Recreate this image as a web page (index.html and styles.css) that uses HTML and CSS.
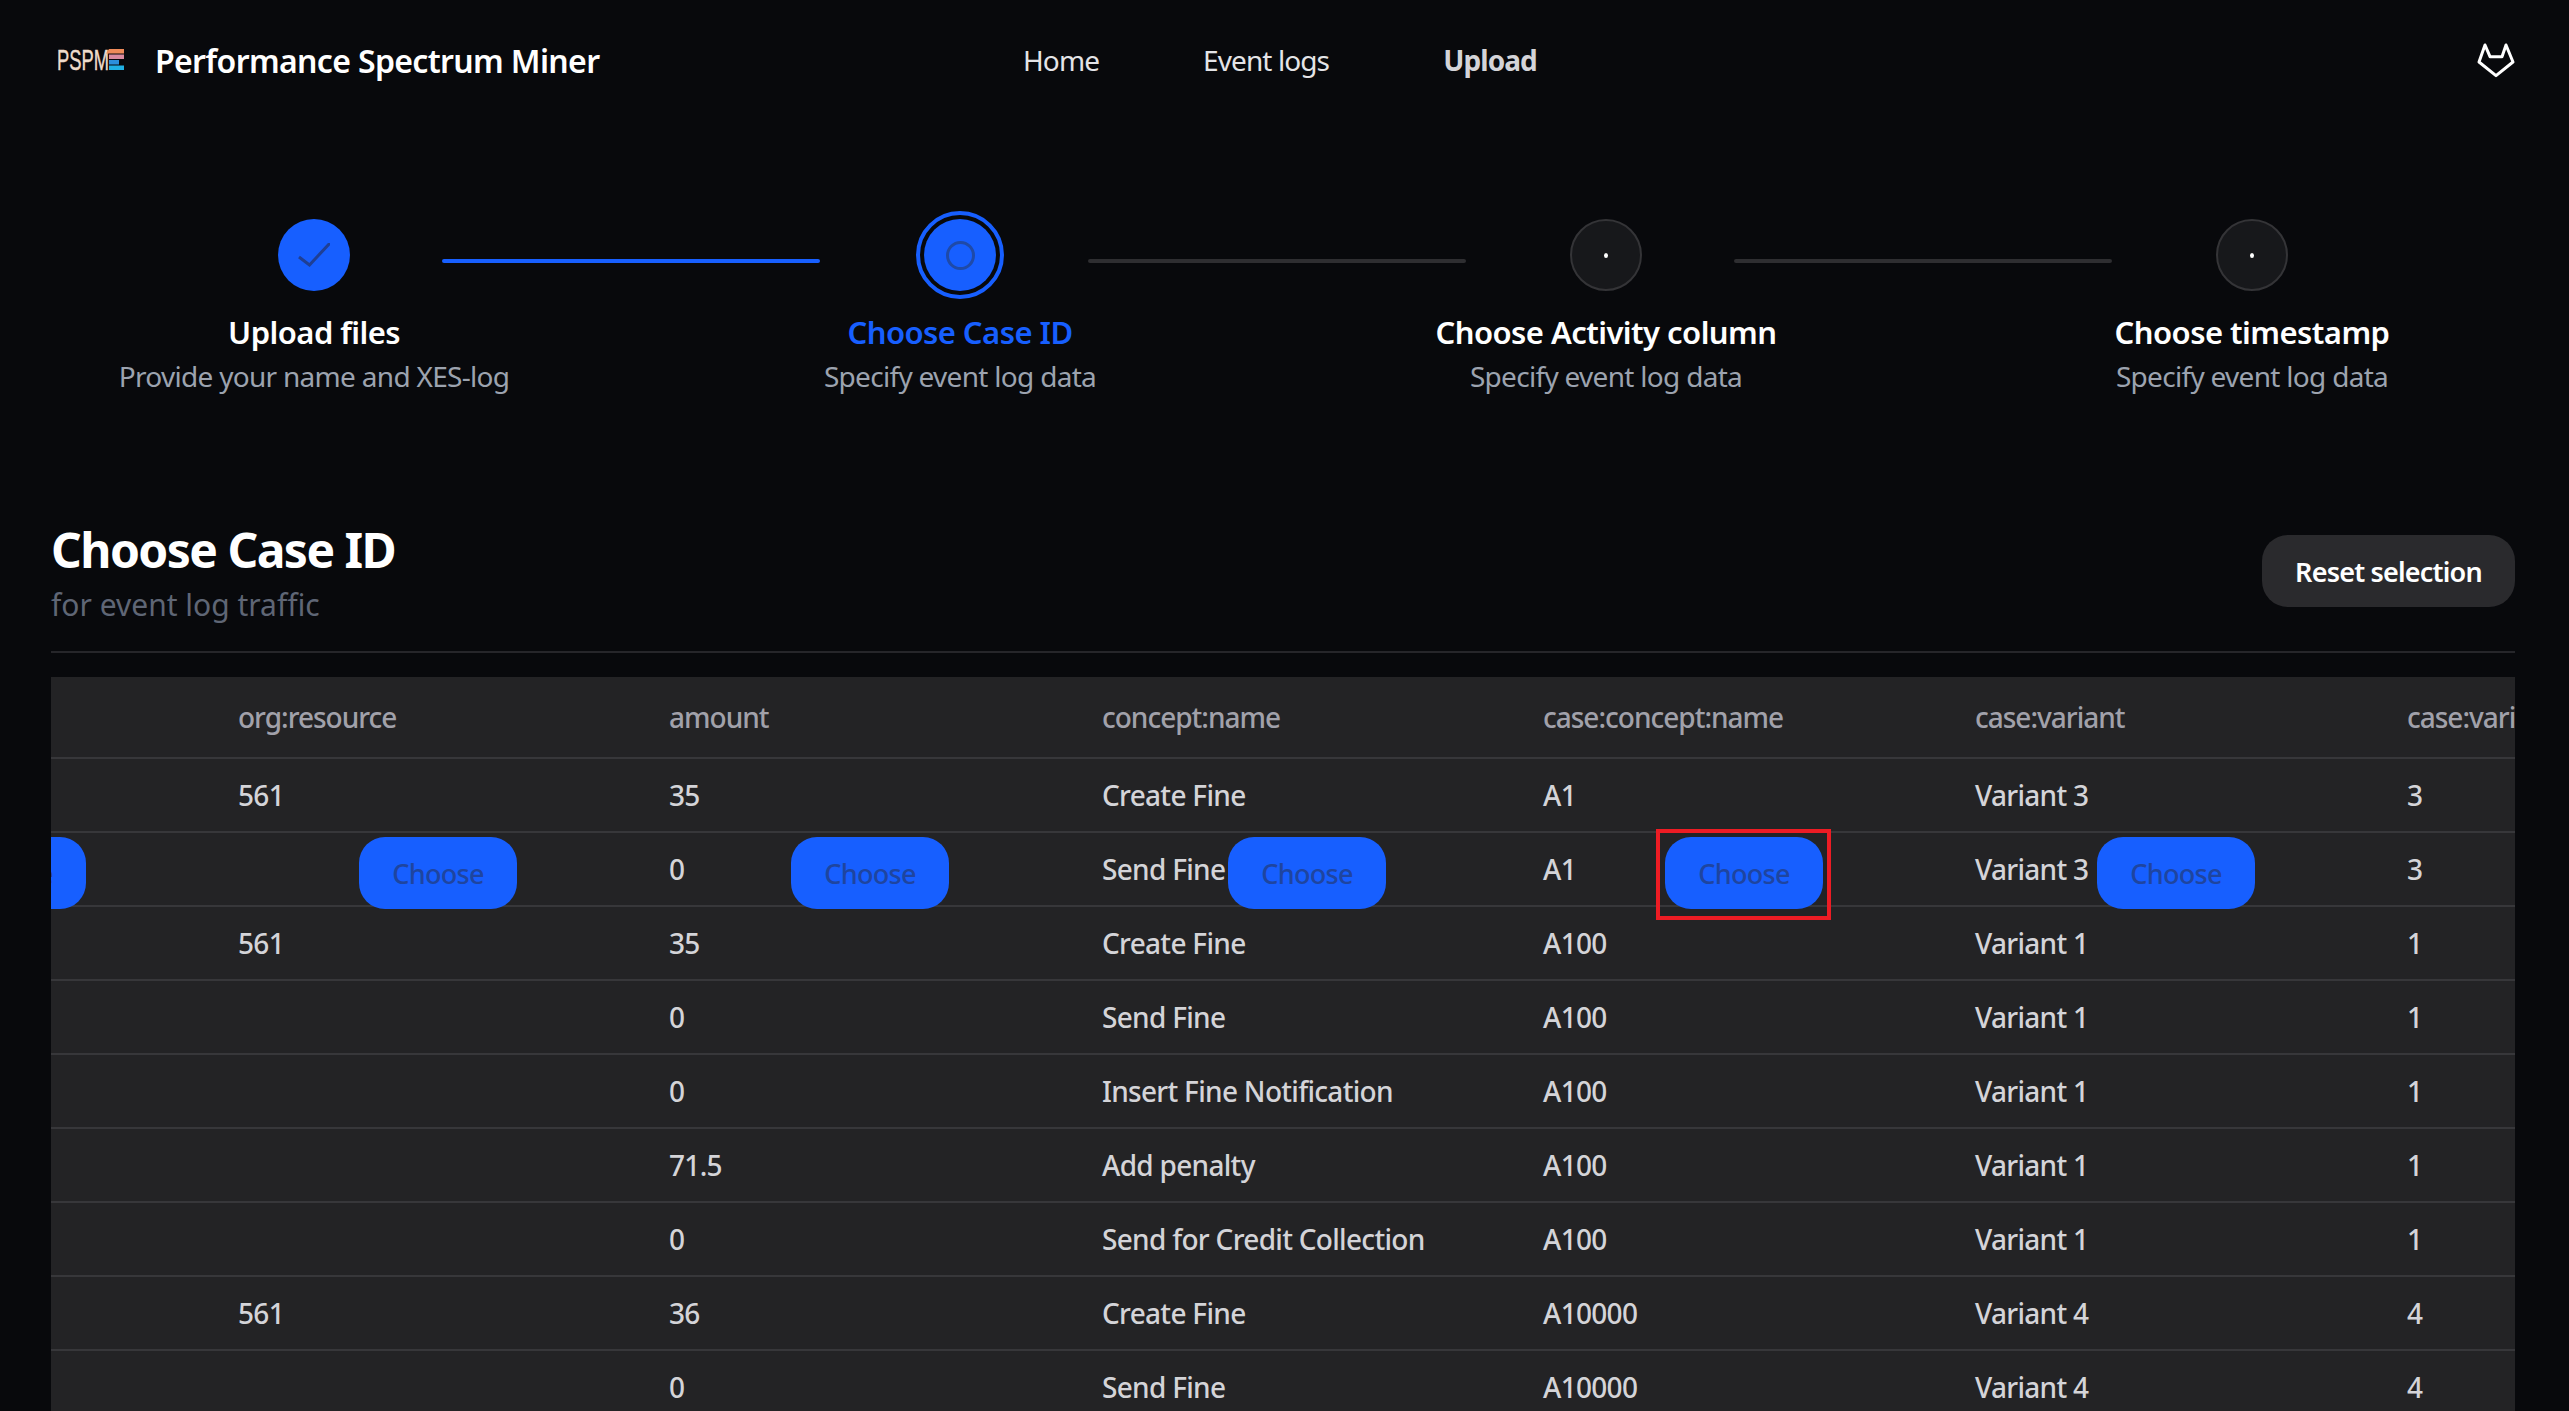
FILE: index.html
```html
<!DOCTYPE html>
<html lang="en">
<head>
<meta charset="utf-8">
<title>Performance Spectrum Miner</title>
<link rel="stylesheet" href="styles.css">
</head>
<body>
<header class="topbar">
  <div class="brand">
    <svg class="logo" viewBox="0 -5 68 34" width="68" height="34" aria-label="PSPM logo">
      <text class="logo-text" x="0" y="21.500" textLength="52" lengthAdjust="spacingAndGlyphs">PSPM</text>
      <path d="M52 1h15v4.500H49z" fill="#ef8b5a"/>
      <rect x="52" y="6.500" width="15" height="4.500" fill="#d98aa0"/>
      <rect x="52" y="12" width="10" height="4.500" fill="#2b8fdc"/>
      <rect x="52" y="17.500" width="15" height="4.500" fill="#1fb0e4"/>
    </svg>
    <span class="brand-name">Performance Spectrum Miner</span>
  </div>
  <nav class="nav">
    <a class="nav-link">Home</a>
    <a class="nav-link">Event logs</a>
    <a class="nav-link nav-current">Upload</a>
  </nav>
  <svg class="gitlab" viewBox="0 0 38 36" width="38" height="36" aria-label="GitLab">
    <path d="M8 3 13 14.700H25L29 3 36 20 19 33.700 2 20Z" fill="none" stroke="#fff" stroke-width="3" stroke-linejoin="round"/>
  </svg>
</header>

<main class="page">
  <ol class="stepper">
    <li class="step">
      <span class="dot dot-done">
        <svg viewBox="0 0 32 24" width="32" height="24"><path d="M1 14 11.500 22 32 0" fill="none" stroke="#1f3f94" stroke-width="3"/></svg>
      </span>
      <span class="step-title">Upload files</span>
      <span class="step-sub">Provide your name and XES-log</span>
    </li>
    <li class="line line-done"></li>
    <li class="step">
      <span class="dot dot-active"><span class="dot-ring"></span></span>
      <span class="step-title step-title-active">Choose Case ID</span>
      <span class="step-sub">Specify event log data</span>
    </li>
    <li class="line"></li>
    <li class="step">
      <span class="dot dot-todo"><span class="dot-point"></span></span>
      <span class="step-title">Choose Activity column</span>
      <span class="step-sub">Specify event log data</span>
    </li>
    <li class="line"></li>
    <li class="step">
      <span class="dot dot-todo"><span class="dot-point"></span></span>
      <span class="step-title">Choose timestamp</span>
      <span class="step-sub">Specify event log data</span>
    </li>
  </ol>

  <section class="section-head">
    <div>
      <h1 class="heading">Choose Case ID</h1>
      <p class="subheading">for event log traffic</p>
    </div>
    <button class="reset">Reset selection</button>
  </section>

  <div class="table-wrap">
    <table class="data">
      <colgroup>
        <col class="c431"><col class="c431"><col class="c433"><col class="c441"><col class="c432"><col class="c432"><col class="c432">
      </colgroup>
      <thead>
        <tr><th></th><th>org:resource</th><th>amount</th><th>concept:name</th><th>case:concept:name</th><th>case:variant</th><th>case:variant-index</th></tr>
      </thead>
      <tbody>
        <tr><td></td><td>561</td><td>35</td><td>Create Fine</td><td>A1</td><td>Variant 3</td><td>3</td></tr>
        <tr>
          <td><button class="choose choose-narrow">Choose</button></td>
          <td><button class="choose choose-narrow">Choose</button></td>
          <td>0<button class="choose">Choose</button></td>
          <td>Send Fine<button class="choose choose-wide">Choose</button></td>
          <td>A1<button class="choose choose-marked">Choose</button></td>
          <td>Variant 3<button class="choose">Choose</button></td>
          <td>3<button class="choose">Choose</button></td>
        </tr>
        <tr><td></td><td>561</td><td>35</td><td>Create Fine</td><td>A100</td><td>Variant 1</td><td>1</td></tr>
        <tr><td></td><td></td><td>0</td><td>Send Fine</td><td>A100</td><td>Variant 1</td><td>1</td></tr>
        <tr><td></td><td></td><td>0</td><td>Insert Fine Notification</td><td>A100</td><td>Variant 1</td><td>1</td></tr>
        <tr><td></td><td></td><td>71.5</td><td>Add penalty</td><td>A100</td><td>Variant 1</td><td>1</td></tr>
        <tr><td></td><td></td><td>0</td><td>Send for Credit Collection</td><td>A100</td><td>Variant 1</td><td>1</td></tr>
        <tr><td></td><td>561</td><td>36</td><td>Create Fine</td><td>A10000</td><td>Variant 4</td><td>4</td></tr>
        <tr><td></td><td></td><td>0</td><td>Send Fine</td><td>A10000</td><td>Variant 4</td><td>4</td></tr>
      </tbody>
    </table>
  </div>
</main>
</body>
</html>
```

FILE: styles.css
```css
* { box-sizing: border-box; }
html, body { margin: 0; height: 100%; overflow: hidden; }
body {
  background: #08090c;
  color: #fff;
  font-family: "Noto Sans", "Open Sans", sans-serif;
  font-size: 28px;
  letter-spacing: -0.9px;
}

/* top bar */
.topbar { display: flex; align-items: center; height: 120px; padding: 0 54px 0 57px; }
.brand { display: flex; align-items: center; gap: 30px; width: 966px; }
.logo { flex: none; margin-top: -1px; }
.logo-text { font-family: "Liberation Sans", sans-serif; font-size: 29px; fill: #efdccb; stroke: #efdccb; stroke-width: 0.4px; letter-spacing: 0; }
.brand-name { font-size: 32px; font-weight: 600; letter-spacing: -0.65px; white-space: nowrap; }
.nav { display: flex; gap: 104px; flex: 1; }
.nav-link { color: #e4e4e7; }
.nav-current { margin-left: 10px; font-weight: 700; color: #d4d4d8; }
.gitlab { flex: none; }

/* page */
.page { padding: 0 54px 0 51px; }

/* stepper */
.stepper { display: flex; justify-content: center; list-style: none; margin: 0; padding: 99px 0 0; height: 400px; }
.step { width: 256px; flex: none; display: flex; flex-direction: column; align-items: center; white-space: nowrap; }
.dot { position: relative; flex: none; width: 72px; height: 72px; border-radius: 50%; display: flex; align-items: center; justify-content: center; }
.dot-done { background: #175fff; }
.dot-active { background: #175fff; }
.dot-active::before { content: ""; position: absolute; inset: -8px; border: 4px solid #175fff; border-radius: 50%; }
.dot-ring { width: 29px; height: 29px; border: 3px solid #1f4aa8; border-radius: 50%; }
.dot-todo { background: #17181b; border: 2px solid #343437; }
.dot-point { width: 4px; height: 5px; border-radius: 50%; background: #fff; }
.step-title { margin-top: 21px; line-height: 40px; font-size: 31px; font-weight: 600; letter-spacing: -0.55px; color: #fff; }
.step-title-active { color: #175fff; }
.step-sub { margin-top: 4px; line-height: 40px; letter-spacing: -0.7px; color: #9ca3af; }
.line { flex: none; width: 378px; height: 4px; margin: 40px 12px 0 0; border-radius: 2px; background: #2e2e31; }
.line-done { background: #175fff; }

/* section heading */
.section-head { display: flex; justify-content: space-between; align-items: center; padding: 0 0 26px; border-bottom: 2px solid #26262a; }
.heading { margin: 0; font-size: 48px; line-height: 60px; font-weight: 700; letter-spacing: -1.55px; }
.subheading { margin: 5px 0 0; line-height: 40px; font-size: 30px; font-weight: 400; letter-spacing: 0; color: #5f6675; }
.reset { width: 253px; height: 72px; margin-bottom: 3px; border: 0; border-radius: 26px; background: #2a2a2d; color: #fff; font: 600 27px "Noto Sans", sans-serif; letter-spacing: -0.8px; }

/* table */
.table-wrap { margin-top: 24px; background: #232325; overflow: hidden; }
.data { table-layout: fixed; width: 3032px; margin-left: -268px; border-collapse: collapse; }
.c431 { width: 431px; }
.c432 { width: 432px; }
.c433 { width: 433px; }
.c441 { width: 441px; }
.data th, .data td { position: relative; padding: 0 0 0 24px; text-align: left; white-space: nowrap; border-bottom: 2px solid #37373a; }
.data th { height: 81px; font-weight: 500; letter-spacing: -1px; color: #a1a1aa; }
.data td { height: 74px; font-weight: 500; letter-spacing: -0.7px; color: #d4d4d8; }
.choose { position: absolute; top: 4px; left: 146px; z-index: 1; width: 158px; height: 72px; border: 0; border-radius: 26px; background: #175fff; color: #1f459f; font: 500 27px "Noto Sans", sans-serif; letter-spacing: -0.7px; }
.choose-narrow { left: 145px; }
.choose-wide { left: 150px; }
.choose-marked::after { content: ""; position: absolute; inset: -8px -8px -11px -9px; border: 4px solid #ed1c24; }
```
